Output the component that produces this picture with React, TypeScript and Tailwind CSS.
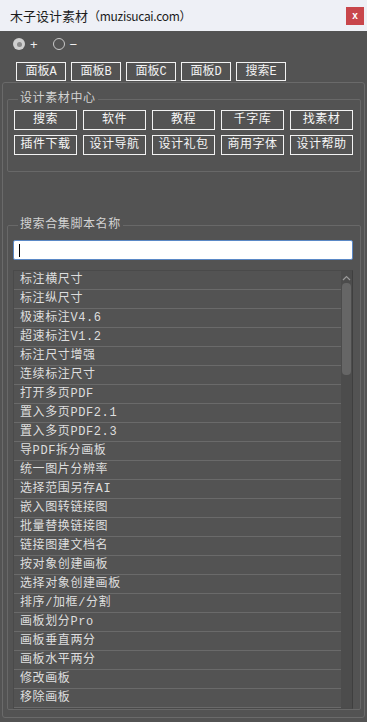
import React from 'react'

const panels = ['面板A', '面板B', '面板C', '面板D', '搜索E']

const links = ['搜索', '软件', '教程', '千字库', '找素材', '插件下载', '设计导航', '设计礼包', '商用字体', '设计帮助']

const scripts = [
  '标注横尺寸',
  '标注纵尺寸',
  '极速标注V4.6',
  '超速标注V1.2',
  '标注尺寸增强',
  '连续标注尺寸',
  '打开多页PDF',
  '置入多页PDF2.1',
  '置入多页PDF2.3',
  '导PDF拆分画板',
  '统一图片分辨率',
  '选择范围另存AI',
  '嵌入图转链接图',
  '批量替换链接图',
  '链接图建文档名',
  '按对象创建画板',
  '选择对象创建画板',
  '排序/加框/分割',
  '画板划分Pro',
  '画板垂直两分',
  '画板水平两分',
  '修改画板',
  '移除画板',
]

export default function App() {
  return (
    <div className="w-[367px] h-[722px] bg-[#535353] flex flex-col overflow-hidden font-['Liberation_Mono','Noto_Sans_CJK_SC',monospace] text-[#e4e4e4]">
      {/* title bar */}
      <div className="h-[31px] shrink-0 bg-[#eef0f6] flex items-center pl-[10px] pr-[3px]">
        <span className="text-[13px] text-[#1c1c1c] font-['Noto_Sans_CJK_SC',sans-serif]">
          木子设计素材<span className="text-[12px] tracking-[-0.3px]">（muzisucai.com）</span>
        </span>
        <div className="ml-auto w-[18px] h-[18px] bg-[#c8464b] flex items-center justify-center text-white text-[10px] font-bold font-['Liberation_Sans',sans-serif] leading-none">
          x
        </div>
      </div>

      {/* radios */}
      <div className="mt-[6px] h-[14px] flex items-center pl-[13px] text-[13px] text-[#f0f0f0] font-['Liberation_Sans',sans-serif]">
        <div className="w-[12px] h-[12px] rounded-full bg-[#cfcfcf] flex items-center justify-center">
          <div className="w-[5px] h-[5px] rounded-full bg-[#8a8a8a]" />
        </div>
        <span className="ml-[5px] leading-none">+</span>
        <div className="ml-[15px] w-[12px] h-[12px] rounded-full border border-[#c8c8c8]" />
        <span className="ml-[5px] leading-none">−</span>
      </div>

      {/* panel buttons */}
      <div className="mt-[11px] flex gap-[5px] pl-[16px]">
        {panels.map((p) => (
          <div
            key={p}
            className="w-[50px] h-[19px] border border-[#f2f2f2] flex items-center justify-center text-[12px] text-[#f2f2f2] leading-none"
          >
            {p}
          </div>
        ))}
      </div>

      {/* outer panel */}
      <div className="mt-px ml-[2px] mr-[2px] flex-1 mb-[4px] border border-[#6a6a6a] rounded-[3px] flex flex-col">
        {/* group 1 */}
        <div className="relative mt-[16px] ml-[4px] mr-[3px] h-[73px] border border-[#686868] rounded-[2px] pt-[10px] pl-[6px]">
          <span className="absolute -top-[9px] left-[10px] px-[2px] bg-[#535353] text-[12px] text-[#d2d2d2] tracking-[0.6px] leading-[16px]">
            设计素材中心
          </span>
          <div className="grid grid-cols-5 gap-x-[6px] gap-y-[5px] w-[339px]">
            {links.map((l) => (
              <div
                key={l}
                className="h-[20px] border border-[#f2f2f2] flex items-center justify-center text-[12px] text-[#f6f6f6] tracking-[0.5px] leading-none"
              >
                {l}
              </div>
            ))}
          </div>
        </div>

        {/* group 2 */}
        <div className="relative mt-[53px] ml-[4px] mr-[3px] flex-1 mb-[7px] border border-[#686868] rounded-[2px] pt-[14px] pl-[5px] pr-[7px] flex flex-col">
          <span className="absolute -top-[9px] left-[10px] px-[2px] bg-[#535353] text-[12px] text-[#d2d2d2] tracking-[0.6px] leading-[16px]">
            搜索合集脚本名称
          </span>
          <div className="h-[20px] bg-white border border-[#5a88c6] rounded-[2px] flex items-center pl-[5px]">
            <div className="w-px h-[13px] bg-black" />
          </div>
          <div className="mt-[10px] flex-1 border border-[#4a4a4a] border-r-[#3f3f3f] flex overflow-hidden">
            <div className="flex-1 flex flex-col">
              {scripts.map((s) => (
                <div
                  key={s}
                  className="h-[19px] shrink-0 border-b border-[#6a6a6a] flex items-center pl-[6px] text-[12px] text-[#dedede] tracking-[0.6px] leading-none whitespace-nowrap"
                >
                  {s}
                </div>
              ))}
            </div>
            <div className="w-[11px] bg-[#4c4c4c] flex flex-col items-center pt-[2px]">
              <svg width="9" height="6" viewBox="0 0 9 6" className="mt-[2px]">
                <path d="M1 5 L4.5 1.5 L8 5" fill="none" stroke="#9a9a9a" strokeWidth="1.2" />
              </svg>
              <div className="mt-[2px] w-[9px] h-[92px] rounded-[4px] bg-[#666666]" />
            </div>
          </div>
        </div>
      </div>
    </div>
  )
}
